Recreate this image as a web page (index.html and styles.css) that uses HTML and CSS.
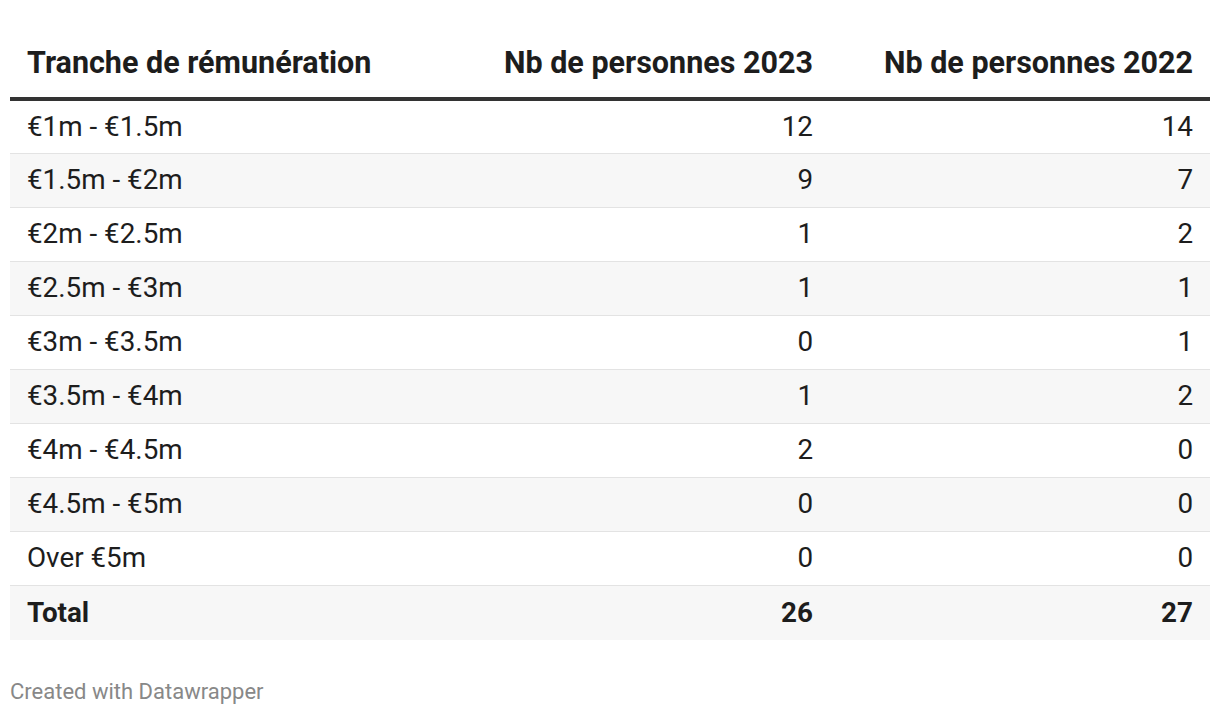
FILE: index.html
```html
<!DOCTYPE html>
<html lang="fr">
<head>
<meta charset="utf-8">
<link rel="stylesheet" href="styles.css">
</head>
<body>
<div class="chart">
  <table class="dw-table">
    <thead>
      <tr>
        <th class="col-label">Tranche de rémunération</th>
        <th class="col-num">Nb de personnes 2023</th>
        <th class="col-num col-last">Nb de personnes 2022</th>
      </tr>
    </thead>
    <tbody>
      <tr><td>€1m - €1.5m</td><td class="num">12</td><td class="num">14</td></tr>
      <tr><td>€1.5m - €2m</td><td class="num">9</td><td class="num">7</td></tr>
      <tr><td>€2m - €2.5m</td><td class="num">1</td><td class="num">2</td></tr>
      <tr><td>€2.5m - €3m</td><td class="num">1</td><td class="num">1</td></tr>
      <tr><td>€3m - €3.5m</td><td class="num">0</td><td class="num">1</td></tr>
      <tr><td>€3.5m - €4m</td><td class="num">1</td><td class="num">2</td></tr>
      <tr><td>€4m - €4.5m</td><td class="num">2</td><td class="num">0</td></tr>
      <tr><td>€4.5m - €5m</td><td class="num">0</td><td class="num">0</td></tr>
      <tr><td>Over €5m</td><td class="num">0</td><td class="num">0</td></tr>
      <tr class="total"><td>Total</td><td class="num">26</td><td class="num">27</td></tr>
    </tbody>
  </table>
  <div class="footer">Created with Datawrapper</div>
</div>
</body>
</html>
```

FILE: styles.css
```css
html, body {
  margin: 0;
  padding: 0;
  background: #ffffff;
}

.chart {
  padding: 31px 10px 0 10px;
  font-family: Roboto, "Liberation Sans", sans-serif;
  color: #1d1d1d;
}

.dw-table {
  width: 1200px;
  border-collapse: collapse;
  table-layout: fixed;
}

.dw-table th {
  font-weight: 700;
  font-size: 30.5px;
  text-align: left;
  padding: 0 17px 17px 17px;
  height: 68px;
  box-sizing: border-box;
  vertical-align: bottom;
  border-bottom: 4px solid #333333;
  line-height: 34px;
}

.dw-table th.col-label { width: 476px; }
.dw-table th.col-num { width: 344px; text-align: right; }
.dw-table th.col-last { width: 380px; }

.dw-table td {
  font-size: 27.8px;
  height: 54px;
  box-sizing: border-box;
  padding: 0 17px;
  line-height: 34px;
  border-bottom: 1px solid #e3e3e3;
  vertical-align: middle;
}

.dw-table td.num { text-align: right; }

.dw-table tbody tr:nth-child(even) td {
  background: #f7f7f7;
}

.dw-table tr.total td {
  font-weight: 700;
  border-bottom: none;
  height: 55px;
}

.footer {
  margin-top: 39px;
  font-size: 22px;
  color: #888888;
}
```
